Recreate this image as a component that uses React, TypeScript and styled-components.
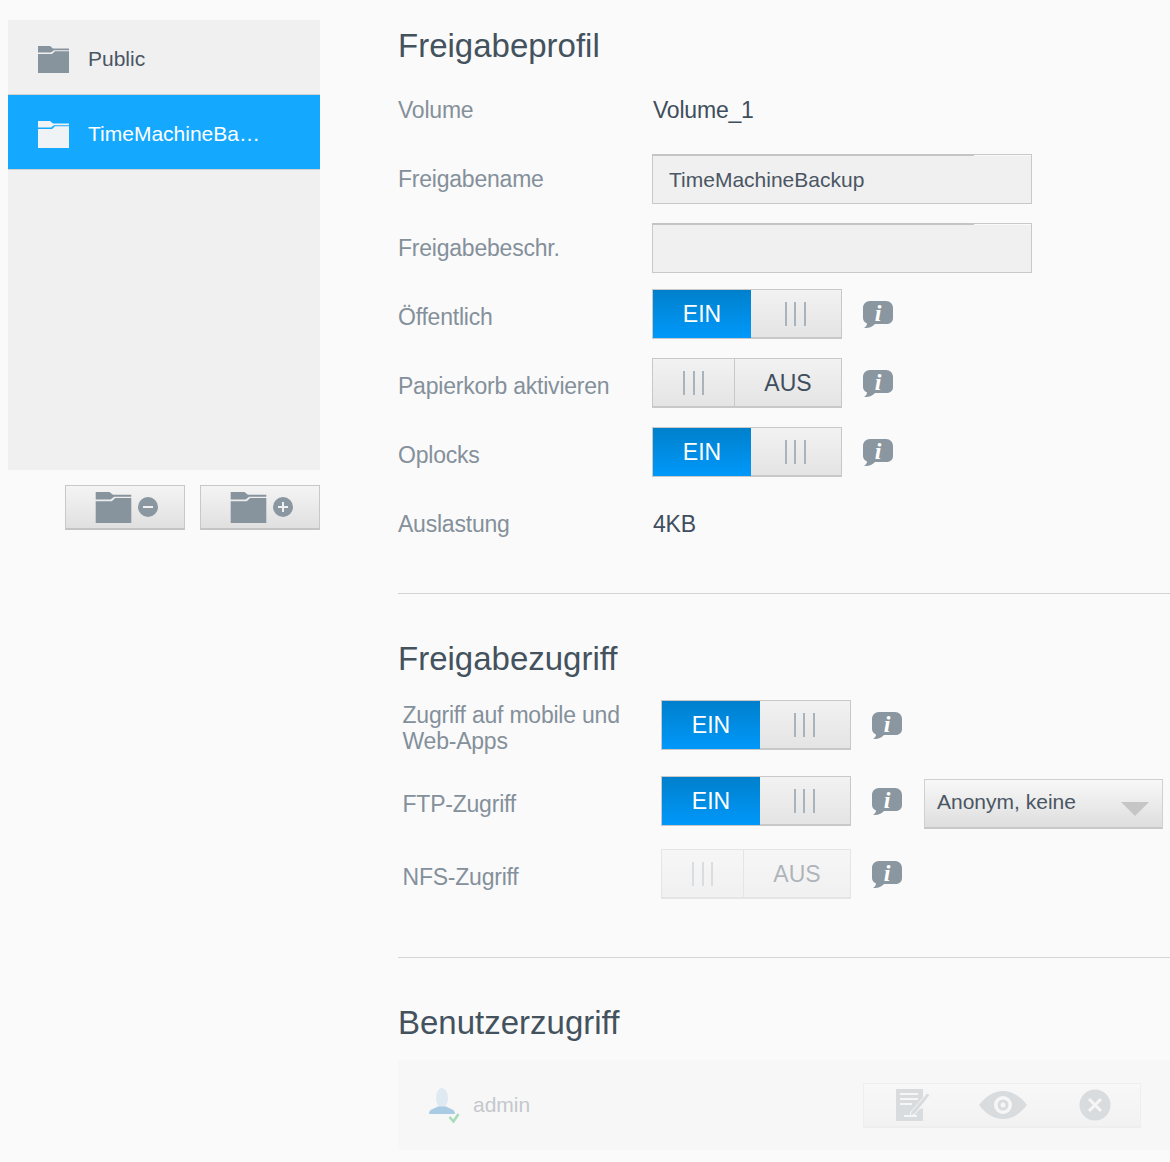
import React from "react";
import styled, { createGlobalStyle } from "styled-components";

const Global = createGlobalStyle`
  html, body { margin: 0; padding: 0; background: #fafafa; }
  body { font-family: "Liberation Sans", Arial, sans-serif; color: #4a5560; }
`;
const Page = styled.div`
  display: flex; width: 1170px; height: 1162px; overflow: hidden; box-sizing: border-box; padding: 20px 0 0 8px;
`;
const Side = styled.aside`
  width: 312px; flex: none; margin-right: 78px; display: flex; flex-direction: column;
`;
const ShareList = styled.div`
  height: 450px; background: #f0f0f0; display: flex; flex-direction: column;
`;
const ShareItem = styled.div<{ $active?: boolean }>`
  box-sizing: border-box; height: 75px; display: flex; align-items: center; padding: 4px 0 0 30px; gap: 19px;
  font-size: 21px; color: ${p => (p.$active ? "#ffffff" : "#4a5663")};
  background: ${p => (p.$active ? "#14a9ff" : "transparent")};
  border-bottom: 1px solid #d2d2d2;
`;
const SideButtons = styled.div`
  display: flex; justify-content: flex-end; gap: 15px; margin-top: 15px;
`;
const SideButton = styled.button`
  box-sizing: border-box; width: 120px; height: 45px; padding: 0 0 0 3px; display: flex; align-items: center; justify-content: center; gap: 6px;
  background: linear-gradient(#f4f4f4, #e0e0e0); border: 1px solid #c8c8c8; border-bottom: 2px solid #c4c4c4;
`;
const Main = styled.main`
  width: 772px; flex: none; display: flex; flex-direction: column;
`;
const Title = styled.h2`
  margin: 0; font-weight: 400; font-size: 33px; line-height: 52px; color: #44525e;
`;
const ProfileRows = styled.div`
  display: flex; flex-direction: column; gap: 20px; margin-top: 13px;
`;
const AccessRows = styled.div`
  display: flex; flex-direction: column; margin-top: 15px; padding-left: 4px;
`;
const Row = styled.div`
  display: grid; grid-template-columns: 254px auto; grid-template-rows: 49px; align-items: center; justify-content: start;
`;
const AccessRow = styled.div<{ $top?: number }>`
  display: grid; grid-template-columns: 259px auto; grid-template-rows: 50px; align-items: center; justify-content: start;
  margin-top: ${p => p.$top ?? 0}px;
`;
const Label = styled.div`
  font-size: 23px; line-height: 26px; color: #84909a; letter-spacing: -0.22px;
`;
const AccessLabel = styled(Label)`
  padding: 5px 0 0 0.5px;
`;
const Value = styled.div`
  font-size: 23px; color: #3f4e5c; letter-spacing: -0.2px; padding: 2px 0 0 1px;
`;
const TextInput = styled.div`
  position: relative; box-sizing: border-box; width: 380px; height: 50px; background: #f0f0f0; border: 1px solid #c8c8c8;
  font-size: 21px; display: flex; align-items: center; padding: 2px 0 0 16px; color: #4a5663;
  &::before { content: ""; position: absolute; left: -1px; top: -1px; width: 322px; height: 2px; background: #c4c4c4; }
  &::after { content: ""; position: absolute; right: 0; top: 0; width: 57px; height: 1px; background: #fafafa; }
`;
const Controls = styled.div<{ $lift?: boolean }>`
  display: flex; align-items: center; margin-bottom: ${p => (p.$lift ? 5 : 0)}px;
`;
const Toggle = styled.div<{ $disabled?: boolean }>`
  box-sizing: border-box; width: 190px; height: 50px; display: flex; border: 1px solid #c8c8c8; border-bottom-width: 2px;
  background: linear-gradient(#f2f2f2, #e4e4e4);
  opacity: ${p => (p.$disabled ? 0.4 : 1)};
`;
const OnPart = styled.div`
  width: 98px; display: flex; align-items: center; justify-content: center; color: #fff; font-size: 23px; background: linear-gradient(#0080cc, #0098fa); margin-bottom: -1px;
`;
const OffPart = styled.div`
  flex: 1; display: flex; align-items: center; justify-content: center; color: #3f4e5c; font-size: 23px; padding-top: 2px;
`;
const Handle = styled.div<{ $left?: boolean }>`
  flex: ${p => (p.$left ? "none" : "1")}; width: ${p => (p.$left ? "81px" : "auto")};
  display: flex; align-items: center; justify-content: center; gap: 7.5px;
  padding-right: ${p => (p.$left ? 0 : 2)}px;
  border-right: ${p => (p.$left ? "1px solid #c8c8c8" : "none")};
  & > i { display: block; width: 2px; height: 24px; background: #a9b3bb; }
`;
const Info = styled.svg`
  width: 32px; height: 30px; margin: 1px 0 0 20px; flex: none;
`;
const Divider = styled.hr<{ $top: number; $bottom: number }>`
  width: 100%; border: 0; border-top: 1px solid #d4d4d4; margin: ${p => p.$top}px 0 ${p => p.$bottom}px;
`;
const Select = styled.div`
  box-sizing: border-box; width: 239px; height: 50px; margin: 3px 0 -3px 21px; display: flex; align-items: center; justify-content: space-between;
  padding: 0 13px 3px 12px; font-size: 21px; color: #4a5663;
  background: linear-gradient(#f8f8f8, #dedede); border: 1px solid #d0d0d0; border-bottom: 2px solid #c8c8c8;
  & > b { width: 0; height: 0; border-left: 14px solid transparent; border-right: 14px solid transparent; border-top: 14px solid #c6c6c6; margin-top: 14px; }
`;
const UserRow = styled.div`
  height: 90px; margin-top: 11px; background: #f7f7f7; display: flex; align-items: center; padding: 0 29px 0 30px; justify-content: space-between;
`;
const UserInfo = styled.div`
  display: flex; align-items: center; gap: 13px; font-size: 21px; color: #c4c8cc;
`;
const ActionBar = styled.div`
  box-sizing: border-box; width: 278px; height: 45px; display: flex; align-items: center; padding: 0 29px 0 32px; justify-content: space-between;
  background: linear-gradient(#f8f8f8, #f2f2f2); border: 1px solid #eeeeee; border-bottom-width: 2px;
`;
const EyeSvg = styled.svg`
  width: 48px; height: 28px; margin-right: 5px; flex: none;
`;

const Folder = ({ color, w = 31, h = 27 }: { color: string; w?: number; h?: number }) => (
  <svg width={w} height={h} viewBox="0 0 31 27">
    <path d="M0 0H12L15 2.5H31V4.2H16L13 6.5H0Z" fill={color} />
    <path d="M0 8H14L17 5.2H31V27H0Z" fill={color} />
  </svg>
);
const Badge = ({ plus }: { plus?: boolean }) => (
  <svg width="20" height="20" viewBox="0 0 20 20">
    <circle cx="10" cy="10" r="10" fill="#8a97a1" />
    <path d={plus ? "M5 10H15M10 5V15" : "M5 10H15"} stroke="#eef0f1" strokeWidth="2" />
  </svg>
);
const InfoIcon = () => (
  <Info viewBox="0 0 32 30">
    <path d="M8 1H24C28 1 31 4 31 8V18C31 22 28 24 24 24H13C10 27 7 28.5 2 28C4 26.5 5 25 5 23.5C2.5 22.5 1 20.5 1 18V8C1 4 4 1 8 1Z" fill="#8a97a1" />
    <text x="16" y="21" textAnchor="middle" fontFamily="'Liberation Serif', serif" fontStyle="italic" fontWeight="700" fontSize="24" fill="#fff">i</text>
  </Info>
);
const Bars = ({ left }: { left?: boolean }) => (
  <Handle $left={left}><i /><i /><i /></Handle>
);
const On = () => (
  <Toggle><OnPart>EIN</OnPart><Bars /></Toggle>
);
const Off = ({ disabled }: { disabled?: boolean }) => (
  <Toggle $disabled={disabled}><Bars left /><OffPart>AUS</OffPart></Toggle>
);
const UserIcon = () => (
  <svg width="32" height="38" viewBox="0 0 32 38">
    <ellipse cx="14" cy="12" rx="6" ry="10" fill="#dfe9f1" />
    <path d="M1 28C1 23 6 23 10 20.5H18C22 23 27 23 27 28Z" fill="#a9cbe3" />
    <path d="M21.5 31L25.5 35.5L30.5 28" fill="none" stroke="#a8dcb9" strokeWidth="2.6" />
  </svg>
);
const NoteIcon = () => (
  <svg width="35" height="32" viewBox="0 0 35 32">
    <path d="M0 0H27V11L16 24L27 19V32H0Z" fill="#d9dcdf" />
    <path d="M4 5H22M4 10H22M4 15H16M8 27H21" stroke="#f6f6f6" strokeWidth="2" />
    <path d="M15 23L31 4L34 6L19 25L14 27Z" fill="#d9dcdf" stroke="#f6f6f6" strokeWidth="1" />
  </svg>
);
const EyeIcon = () => (
  <EyeSvg viewBox="0 0 48 28">
    <path d="M0 14C7 5 15 0 24 0C33 0 41 5 48 14C41 23 33 28 24 28C15 28 7 23 0 14Z" fill="#d9dcdf" />
    <circle cx="24" cy="14" r="9" fill="#f6f6f6" />
    <circle cx="24" cy="14" r="5.5" fill="#d9dcdf" />
    <circle cx="24" cy="14" r="2.5" fill="#f6f6f6" />
  </EyeSvg>
);
const CloseIcon = () => (
  <svg width="32" height="32" viewBox="0 0 32 32">
    <circle cx="16" cy="16" r="15.5" fill="#d9dcdf" />
    <path d="M10 10L22 22M22 10L10 22" stroke="#f6f6f6" strokeWidth="3" />
  </svg>
);

export default function App() {
  return (
    <Page>
      <Global />
      <Side>
        <ShareList>
          <ShareItem><Folder color="#87939d" /><span>Public</span></ShareItem>
          <ShareItem $active><Folder color="#f0f3f5" /><span>TimeMachineBa…</span></ShareItem>
        </ShareList>
        <SideButtons>
          <SideButton><Folder color="#87939d" w={37} h={31} /><Badge /></SideButton>
          <SideButton><Folder color="#87939d" w={37} h={31} /><Badge plus /></SideButton>
        </SideButtons>
      </Side>
      <Main>
        <Title>Freigabeprofil</Title>
        <ProfileRows>
          <Row><Label>Volume</Label><Value>Volume_1</Value></Row>
          <Row><Label>Freigabename</Label><TextInput>TimeMachineBackup</TextInput></Row>
          <Row><Label>Freigabebeschr.</Label><TextInput /></Row>
          <Row><Label>Öffentlich</Label><Controls $lift><On /><InfoIcon /></Controls></Row>
          <Row><Label>Papierkorb aktivieren</Label><Controls $lift><Off /><InfoIcon /></Controls></Row>
          <Row><Label>Oplocks</Label><Controls $lift><On /><InfoIcon /></Controls></Row>
          <Row><Label>Auslastung</Label><Value>4KB</Value></Row>
        </ProfileRows>
        <Divider $top={45} $bottom={39} />
        <Title>Freigabezugriff</Title>
        <AccessRows>
          <AccessRow><AccessLabel>Zugriff auf mobile und<br />Web-Apps</AccessLabel><Controls><On /><InfoIcon /></Controls></AccessRow>
          <AccessRow $top={26}><AccessLabel>FTP-Zugriff</AccessLabel><Controls><On /><InfoIcon /><Select><span>Anonym, keine</span><b /></Select></Controls></AccessRow>
          <AccessRow $top={23}><AccessLabel>NFS-Zugriff</AccessLabel><Controls><Off disabled /><InfoIcon /></Controls></AccessRow>
        </AccessRows>
        <Divider $top={58} $bottom={39} />
        <Title>Benutzerzugriff</Title>
        <UserRow>
          <UserInfo><UserIcon /><span>admin</span></UserInfo>
          <ActionBar><NoteIcon /><EyeIcon /><CloseIcon /></ActionBar>
        </UserRow>
      </Main>
    </Page>
  );
}
